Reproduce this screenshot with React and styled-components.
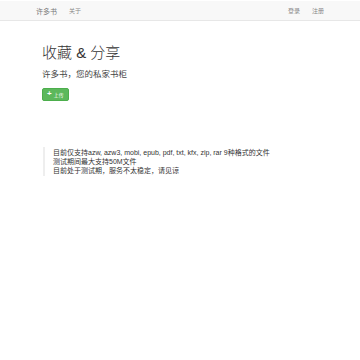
import React from 'react';
import styled, { createGlobalStyle } from 'styled-components';

const GlobalStyle = createGlobalStyle`
    html, body {
        margin: 0;
        padding: 0;
        background: #fff;
        font-family: "Liberation Sans", "Noto Sans CJK SC", sans-serif;
        color: #333;
    }
`;

const Navbar = styled.nav`
    margin-top: 1px;
    height: 19px;
    background: #f8f8f8;
    border-bottom: 1px solid #e7e7e7;
    display: flex;
    align-items: center;
    justify-content: space-between;
    padding: 0 36px;
`;

const NavGroup = styled.div`
    display: flex;
    gap: 12px;
`;

const NavLink = styled.a`
    color: ${(p) => (p.brand ? '#777' : '#888')};
    font-size: ${(p) => (p.brand ? '7px' : '6px')};
    text-decoration: none;
`;

const Hero = styled.section`
    padding: 22px 42px 0;
`;

const Title = styled.h1`
    margin: 0;
    font-size: 15px;
    font-weight: 300;
    line-height: 20px;
    color: #333;
`;

const Lead = styled.p`
    margin: 5px 0 2px;
    font-size: 8.5px;
    line-height: 12px;
    color: #444;
`;

const UploadButton = styled.button`
    display: inline-flex;
    align-items: center;
    gap: 2px;
    height: 13px;
    padding: 0 4px;
    border: 1px solid #4cae4c;
    border-radius: 2px;
    background: #5cb85c;
    color: #fff;
    font-family: inherit;
    font-size: 5px;
`;

const Plus = styled.span`
    font-size: 8px;
    font-weight: 700;
    line-height: 1;
`;

const Notice = styled.blockquote`
    margin: 46px 0 0 43px;
    padding: 1px 0 1px 8px;
    border-left: 2px solid #eee;
    font-size: 7px;
    line-height: 9px;
    color: #333;
`;

const App = () => {
    return (
        <>
            <GlobalStyle />
            <Navbar>
                <NavGroup>
                    <NavLink brand href='#'>许多书</NavLink>
                    <NavLink href='#'>关于</NavLink>
                </NavGroup>
                <NavGroup>
                    <NavLink href='#'>登录</NavLink>
                    <NavLink href='#'>注册</NavLink>
                </NavGroup>
            </Navbar>
            <Hero>
                <Title>收藏 &amp; 分享</Title>
                <Lead>许多书，您的私家书柜</Lead>
                <UploadButton type='button'>
                    <Plus>+</Plus>上传
                </UploadButton>
            </Hero>
            <Notice>
                <div>目前仅支持azw, azw3, mobi, epub, pdf, txt, kfx, zip, rar 9种格式的文件</div>
                <div>测试期间最大支持50M文件</div>
                <div>目前处于测试期，服务不太稳定，请见谅</div>
            </Notice>
        </>
    );
};

export default App;
